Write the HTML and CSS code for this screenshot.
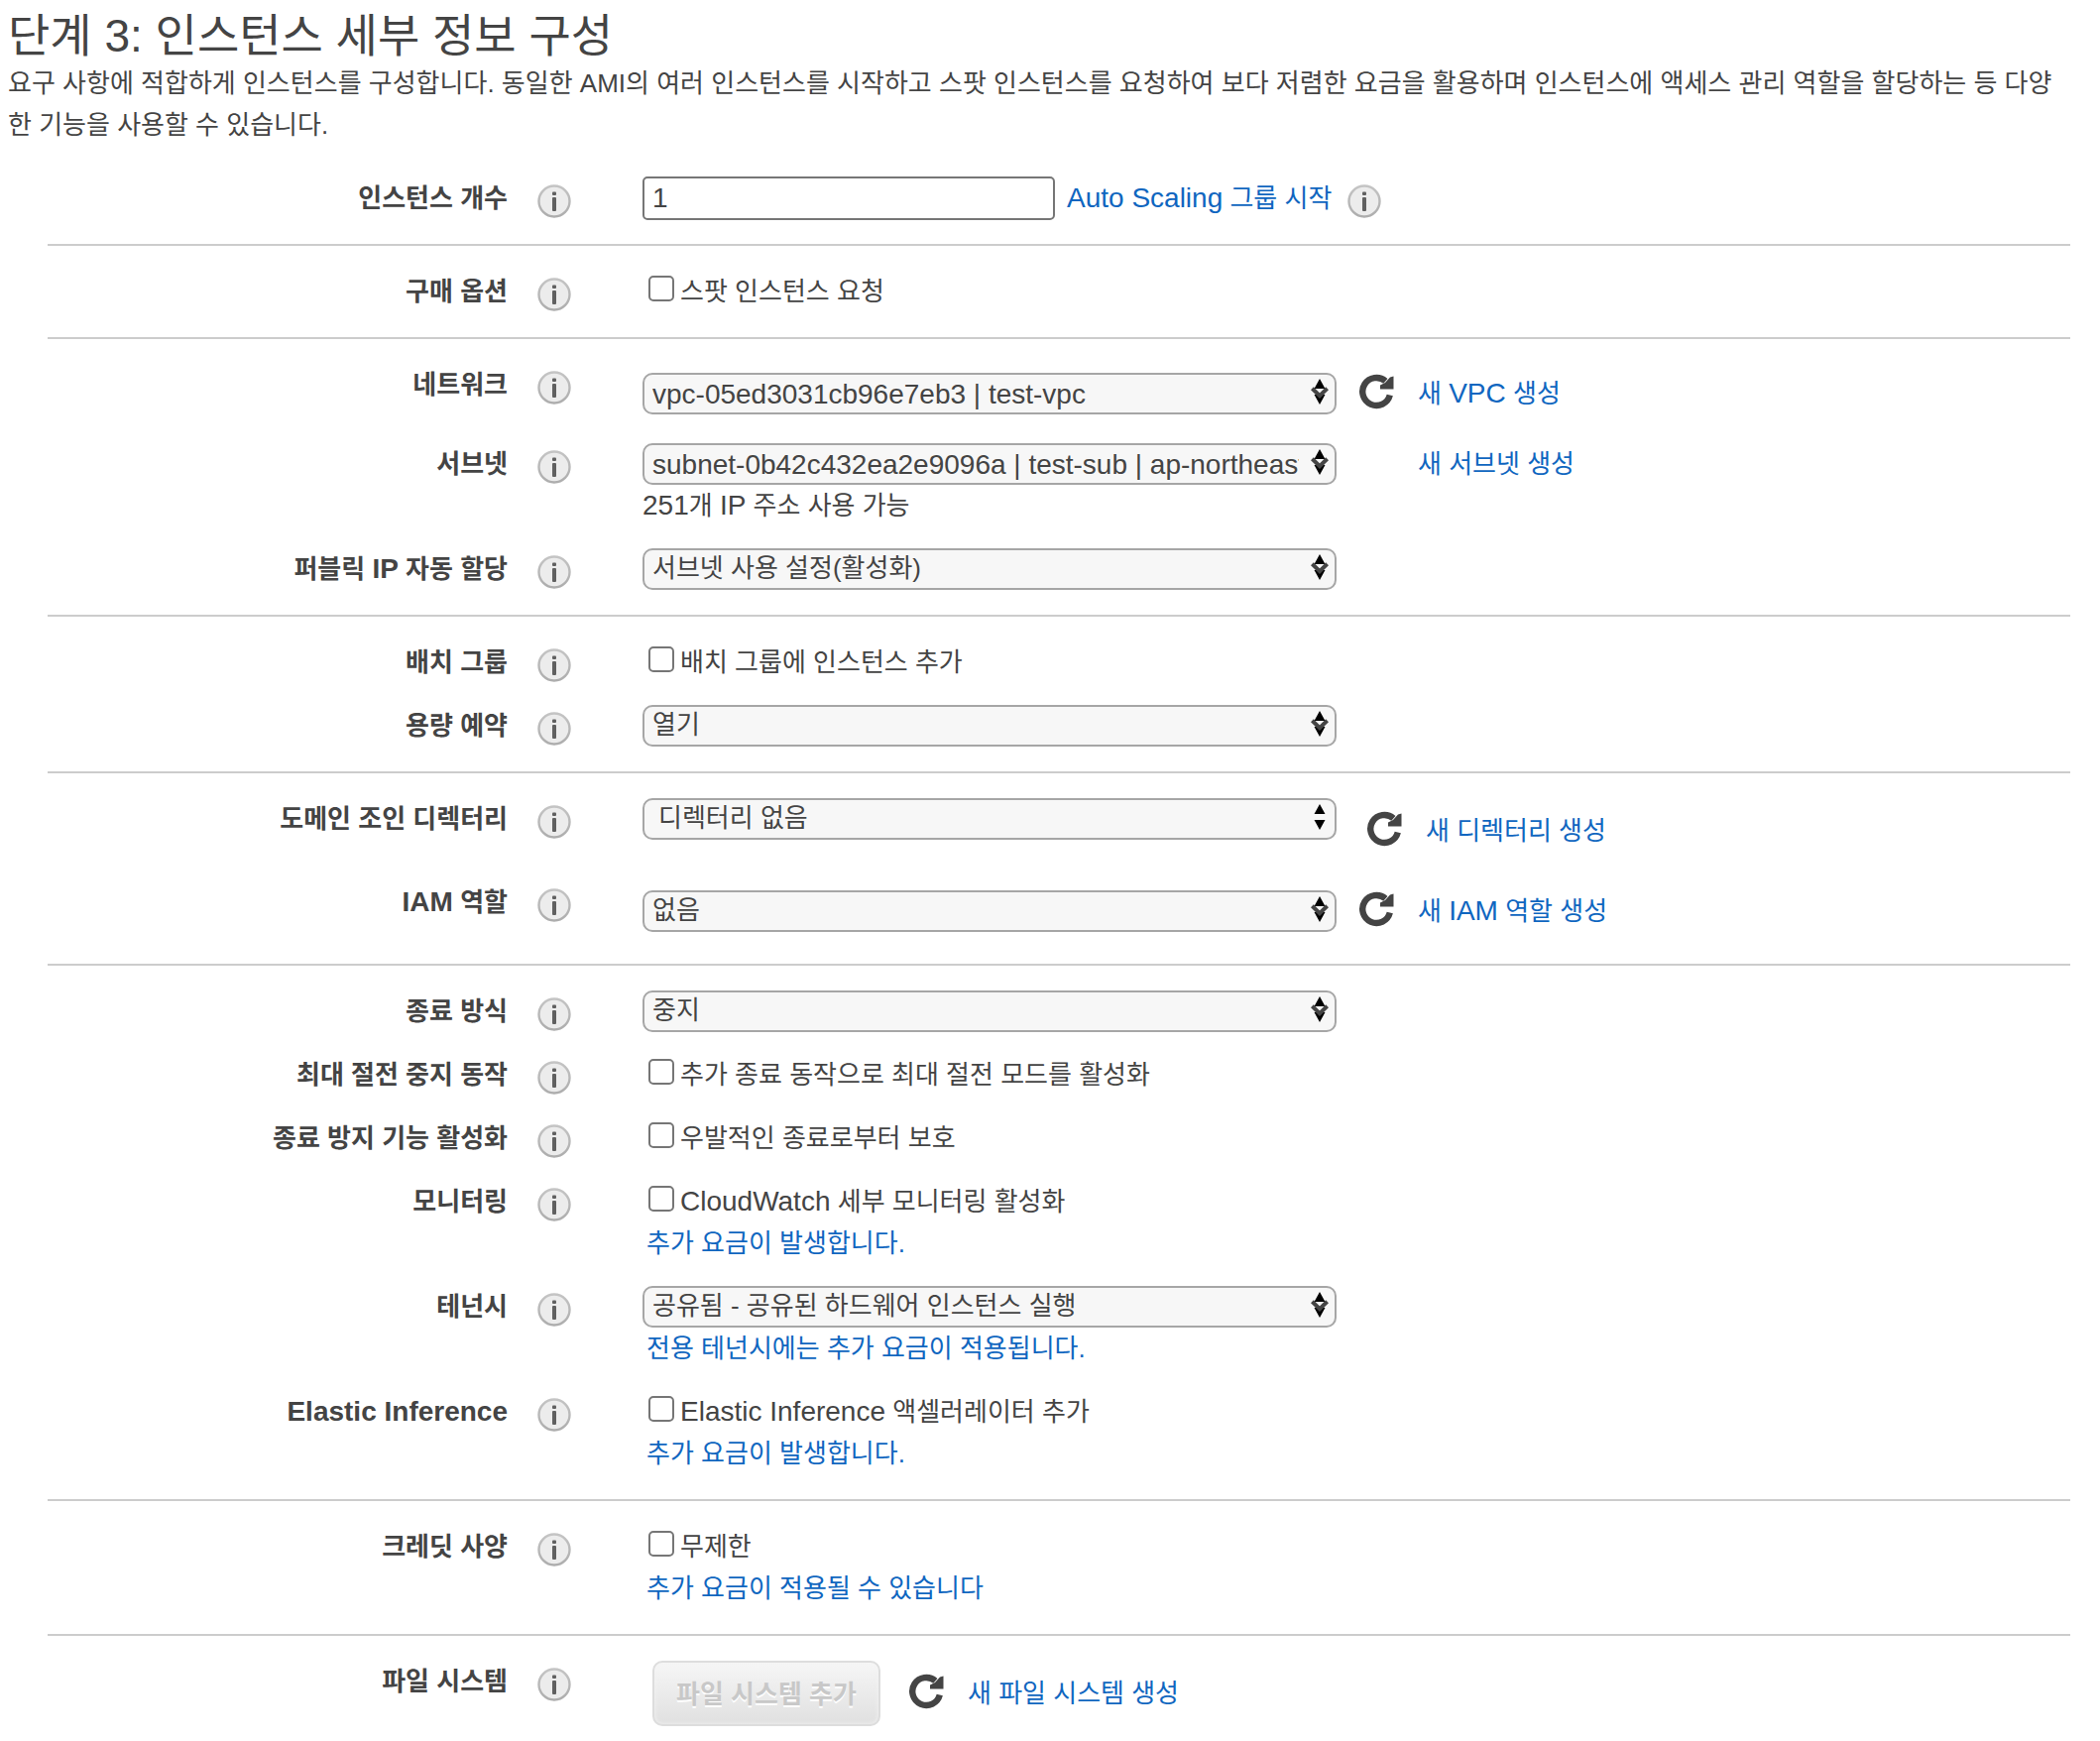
FILE: index.html
```html
<!DOCTYPE html>
<html lang="ko">
<head>
<meta charset="utf-8">
<meta name="viewport" content="width=device-width, initial-scale=1">
<title>단계 3: 인스턴스 세부 정보 구성</title>
<link rel="stylesheet" href="styles.css">
</head>
<body>
<svg class="sprite" aria-hidden="true">
  <defs>
    <linearGradient id="info-rim" x1="0" y1="0" x2="0" y2="1"><stop offset="0" stop-color="#c4c4c4"/><stop offset="1" stop-color="#adadad"/></linearGradient>
    <symbol id="i-info" viewBox="0 0 34 34">
      <circle cx="17" cy="17" r="15.5" fill="#ececec" stroke="url(#info-rim)" stroke-width="2.4"/>
      <rect x="15" y="7.5" width="4" height="3.5" rx="1" fill="#606060"/>
      <rect x="15" y="13" width="4" height="14" rx="1" fill="#606060"/>
    </symbol>
    <symbol id="i-refresh" viewBox="0 0 36 36">
      <path d="M31.800 21.500A14 14 0 1 1 27.400 7.400" fill="none" stroke="#444" stroke-width="6.400"/>
      <path d="M35.500 2.500V15.500H22V11.500L27 9L32 3.500Z" fill="#444"/>
    </symbol>
    <symbol id="i-sort" viewBox="0 0 18 26">
      <path d="M9 0L14.5 10H3.500Z M3.500 16H14.500L9 26Z" fill="#000"/>
    </symbol>
    <symbol id="i-sort-chevron" viewBox="0 0 18 26">
      <path d="M9 0L14.5 10H3.500Z M3.500 16H14.500L9 26Z" fill="#000"/>
      <path d="M1.400 9.800L9 17.200L16.600 9.800" fill="none" stroke="#444" stroke-width="4"/>
    </symbol>
  </defs>
</svg>
<main class="page">
  <h1 class="title">단계 3: 인스턴스 세부 정보 구성</h1>
  <p class="intro">요구 사항에 적합하게 인스턴스를 구성합니다. 동일한 AMI의 여러 인스턴스를 시작하고 스팟 인스턴스를 요청하여 보다 저렴한 요금을 활용하며 인스턴스에 액세스 관리 역할을 할당하는 등 다양한 기능을 사용할 수 있습니다.</p>

  <form class="form">
    <section class="group">
      <div class="row">
        <label class="name" for="count">인스턴스 개수</label>
        <svg class="info"><use href="#i-info"/></svg>
        <div class="field">
          <div class="line line-count">
            <input class="text" id="count" type="text" value="1">
            <a href="#"><span class="latin">Auto Scaling</span> 그룹 시작</a>
            <svg class="info"><use href="#i-info"/></svg>
          </div>
        </div>
      </div>
    </section>

    <section class="group">
      <div class="row">
        <span class="name">구매 옵션</span>
        <svg class="info"><use href="#i-info"/></svg>
        <div class="field"><label class="check"><input type="checkbox">스팟 인스턴스 요청</label></div>
      </div>
    </section>

    <section class="group">
      <div class="row">
        <label class="name" for="vpc">네트워크</label>
        <svg class="info"><use href="#i-info"/></svg>
        <div class="field field-low">
          <div class="line">
            <span class="picker"><select class="latin" id="vpc"><option>vpc-05ed3031cb96e7eb3 | test-vpc</option></select><svg><use href="#i-sort-chevron"/></svg></span>
            <svg class="refresh"><use href="#i-refresh"/></svg>
            <a href="#">새 <span class="latin">VPC</span> 생성</a>
          </div>
        </div>
      </div>
      <div class="row">
        <label class="name" for="subnet">서브넷</label>
        <svg class="info"><use href="#i-info"/></svg>
        <div class="field">
          <div class="line">
            <span class="picker"><select class="latin" id="subnet"><option>subnet-0b42c432ea2e9096a | test-sub | ap-northeast-2a</option></select><svg><use href="#i-sort-chevron"/></svg></span>
            <span class="refresh"></span>
            <a href="#">새 서브넷 생성</a>
          </div>
          <p class="hint"><span class="latin">251</span>개 <span class="latin">IP</span> 주소 사용 가능</p>
        </div>
      </div>
      <div class="row">
        <label class="name" for="public-ip">퍼블릭 <span class="latin">IP</span> 자동 할당</label>
        <svg class="info"><use href="#i-info"/></svg>
        <div class="field"><span class="picker"><select id="public-ip"><option>서브넷 사용 설정(활성화)</option></select><svg><use href="#i-sort-chevron"/></svg></span></div>
      </div>
    </section>

    <section class="group">
      <div class="row">
        <span class="name">배치 그룹</span>
        <svg class="info"><use href="#i-info"/></svg>
        <div class="field"><label class="check"><input type="checkbox">배치 그룹에 인스턴스 추가</label></div>
      </div>
      <div class="row">
        <label class="name" for="capacity">용량 예약</label>
        <svg class="info"><use href="#i-info"/></svg>
        <div class="field"><span class="picker"><select id="capacity"><option>열기</option></select><svg><use href="#i-sort-chevron"/></svg></span></div>
      </div>
    </section>

    <section class="group">
      <div class="row">
        <label class="name" for="directory">도메인 조인 디렉터리</label>
        <svg class="info"><use href="#i-info"/></svg>
        <div class="field field-directory">
          <span class="picker"><select class="indented" id="directory"><option>디렉터리 없음</option></select><svg><use href="#i-sort"/></svg></span>
          <div class="line line-directory">
            <svg class="refresh"><use href="#i-refresh"/></svg>
            <a href="#">새 디렉터리 생성</a>
          </div>
        </div>
      </div>
      <div class="row">
        <label class="name" for="iam"><span class="latin">IAM</span> 역할</label>
        <svg class="info"><use href="#i-info"/></svg>
        <div class="field field-low">
          <div class="line">
            <span class="picker"><select id="iam"><option>없음</option></select><svg><use href="#i-sort-chevron"/></svg></span>
            <svg class="refresh"><use href="#i-refresh"/></svg>
            <a href="#">새 <span class="latin">IAM</span> 역할 생성</a>
          </div>
        </div>
      </div>
    </section>

    <section class="group">
      <div class="row">
        <label class="name" for="shutdown">종료 방식</label>
        <svg class="info"><use href="#i-info"/></svg>
        <div class="field"><span class="picker"><select id="shutdown"><option>중지</option></select><svg><use href="#i-sort-chevron"/></svg></span></div>
      </div>
      <div class="row">
        <span class="name">최대 절전 중지 동작</span>
        <svg class="info"><use href="#i-info"/></svg>
        <div class="field"><label class="check"><input type="checkbox">추가 종료 동작으로 최대 절전 모드를 활성화</label></div>
      </div>
      <div class="row">
        <span class="name">종료 방지 기능 활성화</span>
        <svg class="info"><use href="#i-info"/></svg>
        <div class="field"><label class="check"><input type="checkbox">우발적인 종료로부터 보호</label></div>
      </div>
      <div class="row">
        <span class="name">모니터링</span>
        <svg class="info"><use href="#i-info"/></svg>
        <div class="field">
          <label class="check"><input type="checkbox"><span><span class="latin">CloudWatch</span> 세부 모니터링 활성화</span></label>
          <a class="note" href="#">추가 요금이 발생합니다.</a>
        </div>
      </div>
      <div class="row">
        <label class="name" for="tenancy">테넌시</label>
        <svg class="info"><use href="#i-info"/></svg>
        <div class="field">
          <span class="picker"><select id="tenancy"><option>공유됨 - 공유된 하드웨어 인스턴스 실행</option></select><svg><use href="#i-sort-chevron"/></svg></span>
          <a class="note" href="#">전용 테넌시에는 추가 요금이 적용됩니다.</a>
        </div>
      </div>
      <div class="row">
        <span class="name"><span class="latin">Elastic Inference</span></span>
        <svg class="info"><use href="#i-info"/></svg>
        <div class="field">
          <label class="check"><input type="checkbox"><span><span class="latin">Elastic Inference</span> 액셀러레이터 추가</span></label>
          <a class="note" href="#">추가 요금이 발생합니다.</a>
        </div>
      </div>
    </section>

    <section class="group">
      <div class="row">
        <span class="name">크레딧 사양</span>
        <svg class="info"><use href="#i-info"/></svg>
        <div class="field">
          <label class="check"><input type="checkbox">무제한</label>
          <a class="note" href="#">추가 요금이 적용될 수 있습니다</a>
        </div>
      </div>
    </section>

    <section class="group">
      <div class="row">
        <span class="name">파일 시스템</span>
        <svg class="info"><use href="#i-info"/></svg>
        <div class="field">
          <div class="line line-files">
            <button class="add" type="button" disabled>파일 시스템 추가</button>
            <svg class="refresh"><use href="#i-refresh"/></svg>
            <a href="#">새 파일 시스템 생성</a>
          </div>
        </div>
      </div>
    </section>
  </form>
</main>
</body>
</html>
```
FILE: styles.css
```css
* {
  box-sizing: border-box;
}

body {
  margin: 0;
  background: #fff;
  color: #444;
  font: 26px/42px "Liberation Sans", "Noto Sans CJK KR", sans-serif;
}

a {
  color: #0f66c0;
  text-decoration: none;
}

.sprite {
  position: absolute;
  width: 0;
  height: 0;
}

/* Latin runs are set a little larger so they sit evenly beside hangul */
.latin {
  font-size: 28px;
}

.page {
  padding: 9px 0 0 8px;
}

.title {
  margin: 0;
  font-size: 46px;
  font-weight: 400;
  line-height: 54px;
}

.intro {
  margin: 0;
  padding-right: 32px;
}

.form {
  margin: 7px 30px 0 40px;
}

.group {
  display: grid;
  row-gap: 22px;
  padding: 25px 0;
}

.group + .group {
  border-top: 2px solid #ccc;
}

.row {
  display: grid;
  grid-template-columns: 464px 34px 1fr;
  column-gap: 30px;
  align-items: start;
}

.name {
  font-weight: 700;
  text-align: right;
}

.info {
  width: 34px;
  height: 34px;
  margin-top: 7px;
  flex: none;
}

.field {
  padding-left: 42px;
}

.field-low {
  padding-top: 9px;
  padding-bottom: 7px;
}

.line {
  display: flex;
  align-items: center;
}

.line-count {
  gap: 12px;
  height: 42px;
}

.line-count .info {
  margin: 5px 0 0 4px;
}

.text {
  width: 416px;
  height: 44px;
  padding: 0 8px;
  border: 2px solid #767676;
  border-radius: 5px;
  color: #444;
  font: 28px "Liberation Sans", sans-serif;
}

.check {
  display: flex;
  align-items: center;
  gap: 6px;
  padding-left: 6px;
}

.check input {
  appearance: none;
  width: 26px;
  height: 26px;
  margin: 0 0 6px;
  border: 2px solid #767676;
  border-radius: 5px;
  background: #fff;
}

.picker {
  position: relative;
  display: block;
  width: 700px;
  height: 42px;
}

.picker select {
  appearance: none;
  display: block;
  width: 100%;
  height: 42px;
  padding: 0 36px 2px 8px;
  border: 2px solid #a6a6a6;
  border-radius: 10px;
  background: #f7f7f7;
  color: #444;
  font-family: inherit;
  font-size: 26px;
  text-overflow: clip;
}

.picker select.latin {
  padding-bottom: 0;
  font-size: 28px;
}

.picker select.indented {
  padding-left: 14px;
}

.picker svg {
  position: absolute;
  top: 6px;
  right: 8px;
  width: 18px;
  height: 26px;
  pointer-events: none;
}

.refresh {
  width: 36px;
  height: 36px;
  margin: 0 24px 4px 22px;
  flex: none;
}

.hint {
  margin: 0;
}

.note {
  display: block;
  padding-left: 4px;
}

.field-directory {
  display: flex;
  padding-bottom: 8px;
}

.line-directory {
  margin-top: 12px;
  margin-left: 8px;
}

.line-files {
  padding-left: 10px;
}

.line-files .refresh {
  margin-left: 28px;
}

.add {
  width: 230px;
  height: 66px;
  padding: 0 0 4px;
  border: 2px solid #ddd;
  border-radius: 10px;
  background: linear-gradient(#f6f6f6, #e0e0e0);
  box-shadow: inset 0 0 4px #f4f4f4;
  color: #c8c8c8;
  font: 700 26px "Liberation Sans", "Noto Sans CJK KR", sans-serif;
  text-shadow: 0 2px 0 #fff;
}
```
